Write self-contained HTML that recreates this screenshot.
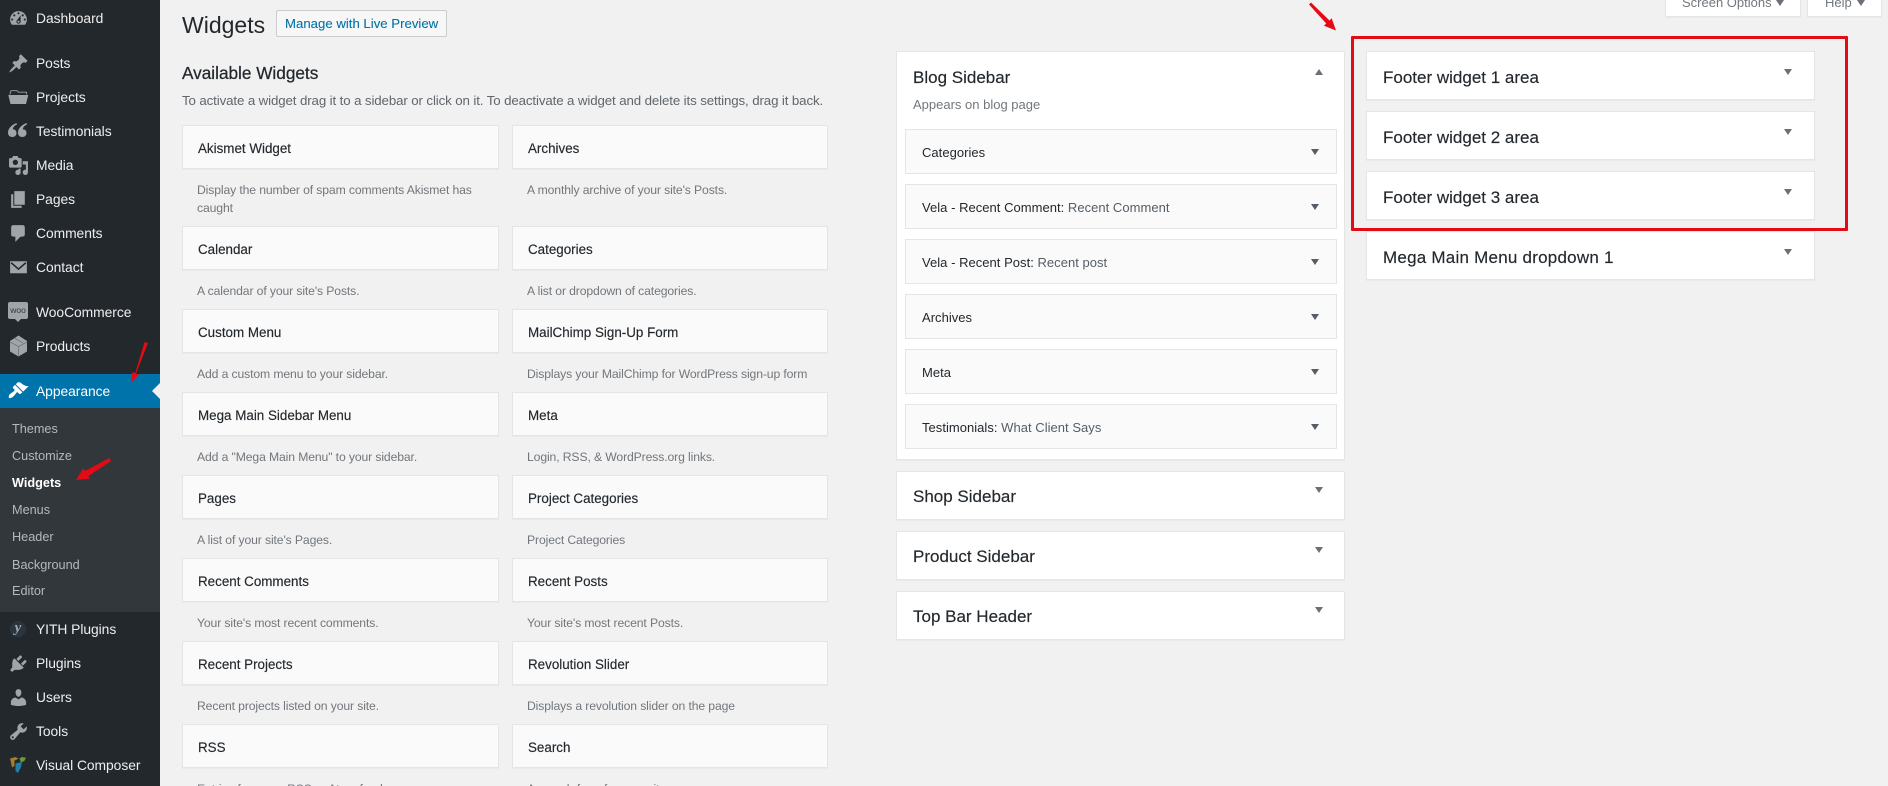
<!DOCTYPE html>
<html lang="en"><head><meta charset="utf-8"><title>Widgets</title>
<style>
*{box-sizing:border-box}
html,body{margin:0;padding:0;width:1888px;height:786px;overflow:hidden;background:#f1f1f1}
body{position:relative;font-family:"Liberation Sans",Arial,sans-serif;color:#23282d}
.a{position:absolute}
.t{position:absolute;white-space:nowrap;line-height:20px;height:20px}
#side{position:absolute;left:0;top:0;width:160px;height:786px;background:#23282d}
#sub{position:absolute;left:0;top:408px;width:160px;height:204px;background:#32373c}
#cur{position:absolute;left:0;top:374px;width:160px;height:34px;background:#0073aa}
#cur:after{content:"";position:absolute;right:0;top:9px;border:8px solid transparent;border-right-color:#f1f1f1;border-left:0}
.m{left:36px;font-size:13.85px;color:#eee;letter-spacing:-.05px}
.s{left:12px;font-size:12.7px;color:#b4b9be}
.i{position:absolute;left:8px;width:21px;height:21px;fill:#a0a5aa}
.w{position:absolute;width:317px;height:44px;background:#fafafa;border:1px solid #e5e5e5;box-shadow:0 1px 1px rgba(0,0,0,.04)}
.wt{font-size:13.4px;color:#23282d;-webkit-text-stroke:.15px #23282d;margin-top:1px}
.d{font-size:12.2px;color:#72777c;letter-spacing:-.12px}
.box{position:absolute;background:#fff;border:1px solid #e5e5e5;box-shadow:0 1px 1px rgba(0,0,0,.04)}
.h{font-size:17px;color:#23282d;-webkit-text-stroke:.15px #23282d;margin-top:1px}
.in{position:absolute;left:905px;width:432px;height:45px;background:#fafafa;border:1px solid #e5e5e5}
.it{left:922px;font-size:13px;color:#23282d;letter-spacing:.03px;margin-top:1px}
.it span{color:#555d66}
.c{position:absolute;width:0;height:0;border-left:4px solid transparent;border-right:4px solid transparent;border-top:6px solid #6a7077}
.u{border-top:0;border-bottom:6px solid #6a7077}
.ib{border-top-color:#555d66}
</style></head><body>

<div id="side"></div><div id="sub"></div><div id="cur"></div>

<svg class="i" style="top:8px" viewBox="0 0 20 20"><path d="M3.76 16h12.48c1.1-1.37 1.76-3.11 1.76-5 0-4.42-3.58-8-8-8s-8 3.58-8 8c0 1.89.66 3.63 1.76 5zM10 4c.55 0 1 .45 1 1s-.45 1-1 1-1-.45-1-1 .45-1 1-1zM6 6c.55 0 1 .45 1 1s-.45 1-1 1-1-.45-1-1 .45-1 1-1zm8 0c.55 0 1 .45 1 1s-.45 1-1 1-1-.45-1-1 .45-1 1-1zm-5.37 5.55L12 7v6c0 1.1-.9 2-2 2s-2-.9-2-2c0-.57.24-1.08.63-1.45zM4 10c.55 0 1 .45 1 1s-.45 1-1 1-1-.45-1-1 .45-1 1-1zm12 0c.55 0 1 .45 1 1s-.45 1-1 1-1-.45-1-1 .45-1 1-1zm-5 3c0-.55-.45-1-1-1s-1 .45-1 1 .45 1 1 1 1-.45 1-1z" fill-rule="evenodd"/></svg>
<svg class="i" style="top:53px" viewBox="0 0 20 20"><path d="M10.44 3.02l1.82-1.82 6.36 6.35-1.83 1.82c-1.05-.68-2.48-.57-3.41.36l-.75.75c-.92.93-1.04 2.35-.35 3.41l-1.83 1.82-2.41-2.41-2.8 2.79c-.42.42-3.38 2.71-3.8 2.29s1.86-3.39 2.28-3.81l2.79-2.79L4.1 9.36l1.83-1.82c1.05.69 2.48.57 3.4-.36l.75-.75c.93-.92 1.05-2.35.36-3.41z"/></svg>
<svg class="i" style="top:87px" viewBox="0 0 21 21"><path d="M.3 8h20l-2.300 9H2.500z"/><path d="M1.800 7.500L3 3.700h6l1.400 1.500h8v2.300" fill="none" stroke="#a0a5aa" stroke-width=".9"/></svg>
<svg class="i" style="top:123px;width:19px;height:14px" viewBox="0 0 19 14"><path d="M8.500 0C3.500 2 0 5.500 0 9.500 0 12.500 1.800 14 4.300 14 6.800 14 8.500 12.300 8.500 10 8.500 7.800 7 6.300 4.800 6.300 5 4 6.500 2.500 9 1.500zM18.500 0C13.500 2 10 5.500 10 9.500 10 12.500 11.800 14 14.300 14 16.800 14 18.500 12.300 18.500 10 18.500 7.800 17 6.300 14.800 6.300 15 4 16.500 2.500 19 1.500z"/></svg>
<svg class="i" style="top:155px" viewBox="0 0 20 20"><path d="M13 11V4c0-.55-.45-1-1-1h-1.670L9 1H5L3.670 3H2c-.55 0-1 .45-1 1v7c0 .55.45 1 1 1h10c.55 0 1-.45 1-1zM7 4.500c1.380 0 2.500 1.120 2.500 2.500S8.380 9.500 7 9.500 4.500 8.380 4.500 7 5.620 4.500 7 4.500zM14 6h5v10.500c0 1.380-1.120 2.500-2.500 2.500S14 17.880 14 16.500s1.120-2.500 2.500-2.500c.17 0 .34.02.5.05V9h-3V6zm-4 8.050V13h2v3.500c0 1.380-1.120 2.500-2.500 2.500S7 17.880 7 16.500 8.120 14 9.500 14c.17 0 .34.02.5.05z" fill-rule="evenodd"/></svg>
<svg class="i" style="top:189px" viewBox="0 0 20 20"><path d="M6 15V2h10v13H6zm-1 1h8v2H3V5h2v11z"/></svg>
<svg class="i" style="top:223px" viewBox="0 0 20 20"><path d="M5 2h9c1.100 0 2 .9 2 2v7c0 1.100-.9 2-2 2h-2l-5 5v-5H5c-1.100 0-2-.9-2-2V4c0-1.100.9-2 2-2z"/></svg>
<svg class="i" style="top:257px" viewBox="0 0 20 20"><path d="M2 4h16v11.500H2z"/><path d="M3 5.500l7 6 7-6" fill="none" stroke="#23282d" stroke-width="1.500"/></svg>

<div class="a" style="left:8px;top:302px;width:20px;height:17px;background:#a0a5aa;border-radius:2px"></div>
<div class="a" style="left:15px;top:319px;width:0;height:0;border-left:3px solid transparent;border-right:3px solid transparent;border-top:3px solid #a0a5aa"></div>
<div class="t" style="left:8px;top:300px;width:20px;text-align:center;font-size:8.500px;color:#32373c">woo</div>
<svg class="a" style="left:9px;top:335px;width:19px;height:22px" viewBox="0 0 19 22"><path d="M9.500.5l8.500 5.500v10.500L9.500 21.500 1 16.500V6z" fill="#a0a5aa"/><path d="M1 7l8.500 4.500L18 7M9.500 11.500V21M5.500 3l8.500 5" fill="none" stroke="#5f6469" stroke-width=".6"/></svg>
<svg class="i" style="top:380px;fill:#fff" viewBox="0 0 20 20"><path d="M14.480 11.060L7.410 3.990l1.500-1.500c.5-.56 2.300-.47 3.510.32 1.210.8 1.430 1.280 2.910 2.100 1.180.64 2.450 1.260 4.450.85zm-.71.71L6.700 4.700 4.930 6.470c-.39.39-.39 1.020 0 1.410l1.060 1.060c.39.39.39 1.030 0 1.420-.6.6-1.430 1.110-2.210 1.690-.35.26-.7.53-1.010.84C1.430 13.230.2 15.800.9 16.900c.9 1.100 3.400-.4 4.700-1.700.31-.31.58-.66.84-1.010.58-.78 1.090-1.610 1.690-2.210.39-.39 1.030-.39 1.420 0l1.060 1.060c.39.39 1.020.39 1.410 0z"/></svg>

<div class="a" style="left:10px;top:621px;width:16px;height:16px;border-radius:50%;background:#2b3540"></div>
<div class="t" style="left:10px;top:618px;width:16px;text-align:center;font:italic 700 15px/20px 'Liberation Serif',serif;color:#a0a5aa">y</div>
<svg class="i" style="top:653px" viewBox="0 0 20 20"><path d="M13.110 4.360L9.870 7.600 8 5.730l3.240-3.240c.35-.34 1.050-.2 1.560.32.52.51.66 1.210.31 1.550zm-8 1.770l.91-1.120 9.010 9.010-1.190.84c-.71.71-2.630 1.160-3.820 1.160H6.140L4.900 17.260c-.59.59-1.540.59-2.120 0-.59-.58-.59-1.530 0-2.120l1.240-1.240v-3.880c0-1.130.4-3.190 1.090-3.890zm7.260 3.970l3.240-3.240c.34-.35 1.040-.21 1.550.31.52.51.66 1.210.31 1.550l-3.240 3.250z"/></svg>
<svg class="i" style="top:687px" viewBox="0 0 20 20"><path d="M10 9.250c-2.270 0-2.730-3.440-2.730-3.440C7 4.020 7.820 2 9.970 2c2.160 0 2.980 2.020 2.710 3.810 0 0-.41 3.440-2.680 3.440zm0 2.570L12.720 10c2.390 0 4.520 2.330 4.520 4.530v2.490s-3.650 1.130-7.240 1.130c-3.650 0-7.240-1.130-7.240-1.130v-2.490c0-2.250 1.940-4.480 4.470-4.480z"/></svg>
<svg class="i" style="top:721px" viewBox="0 0 20 20"><path d="M16.680 9.770c-1.340 1.340-3.300 1.670-4.950.99l-5.410 6.520c-.99.99-2.590.99-3.580 0s-.99-2.590 0-3.570l6.520-5.420c-.68-1.650-.35-3.610.99-4.950 1.280-1.280 3.120-1.620 4.720-1.060l-2.890 2.890 2.820 2.820 2.860-2.870c.53 1.580.18 3.390-1.080 4.650zM3.810 16.210c.4.39 1.040.39 1.430 0 .4-.4.4-1.040 0-1.430-.39-.4-1.030-.4-1.430 0-.39.39-.39 1.030 0 1.430z" fill-rule="evenodd"/></svg>
<svg class="a" style="left:10px;top:757px;width:16px;height:16px" viewBox="0 0 16 16"><path d="M0 1.500L5.500 0l3 1.800L4.500 3.500v5.500l-2.500 1.500-1-5z" fill="#a67c2d"/><path d="M9.500 1.500L12 0l4 .8-1.500 3-3.500 1.700z" fill="#6f9a3a"/><path d="M5.500 6.500L12 5l-1 5-3 6-2.500-2z" fill="#1f7fa8"/></svg>

<div class="t m" style="top:8px">Dashboard</div>
<div class="t m" style="top:53px">Posts</div>
<div class="t m" style="top:87px">Projects</div>
<div class="t m" style="top:121px">Testimonials</div>
<div class="t m" style="top:155px">Media</div>
<div class="t m" style="top:189px">Pages</div>
<div class="t m" style="top:223px">Comments</div>
<div class="t m" style="top:257px">Contact</div>
<div class="t m" style="top:302px">WooCommerce</div>
<div class="t m" style="top:336px">Products</div>
<div class="t m" style="top:381px;color:#fff">Appearance</div>
<div class="t s" style="top:419px">Themes</div>
<div class="t s" style="top:446px">Customize</div>
<div class="t s" style="top:473px;color:#fff;font-weight:700">Widgets</div>
<div class="t s" style="top:500px">Menus</div>
<div class="t s" style="top:527px">Header</div>
<div class="t s" style="top:555px">Background</div>
<div class="t s" style="top:581px">Editor</div>
<div class="t m" style="top:619px">YITH Plugins</div>
<div class="t m" style="top:653px">Plugins</div>
<div class="t m" style="top:687px">Users</div>
<div class="t m" style="top:721px">Tools</div>
<div class="t m" style="top:755px">Visual Composer</div>

<div class="t" style="left:182px;top:15px;font-size:23px;line-height:20px">Widgets</div>
<div class="a" style="left:276px;top:10px;width:171px;height:27px;border:1px solid #ccc;border-radius:2px;background:#f7f7f7"></div>
<div class="t" style="left:285px;top:14px;font-size:13.2px;color:#0073aa;-webkit-text-stroke:.1px #0073aa">Manage with Live Preview</div>
<div class="t" style="left:182px;top:63px;font-size:17.200px;-webkit-text-stroke:.25px #23282d">Available Widgets</div>
<div class="t" style="left:182px;top:91px;font-size:13.300px;color:#60666c;letter-spacing:-.12px">To activate a widget drag it to a sidebar or click on it. To deactivate a widget and delete its settings, drag it back.</div>

<div class="w" style="left:182px;top:125px"></div><div class="w" style="left:512px;top:125px;width:316px"></div>
<div class="w" style="left:182px;top:226px"></div><div class="w" style="left:512px;top:226px;width:316px"></div>
<div class="w" style="left:182px;top:309px"></div><div class="w" style="left:512px;top:309px;width:316px"></div>
<div class="w" style="left:182px;top:392px"></div><div class="w" style="left:512px;top:392px;width:316px"></div>
<div class="w" style="left:182px;top:475px"></div><div class="w" style="left:512px;top:475px;width:316px"></div>
<div class="w" style="left:182px;top:558px"></div><div class="w" style="left:512px;top:558px;width:316px"></div>
<div class="w" style="left:182px;top:641px"></div><div class="w" style="left:512px;top:641px;width:316px"></div>
<div class="w" style="left:182px;top:724px"></div><div class="w" style="left:512px;top:724px;width:316px"></div>

<div class="t wt" style="left:198px;top:138px">Akismet Widget</div><div class="t wt" style="left:528px;top:138px">Archives</div>
<div class="t d" style="left:197px;top:180px">Display the number of spam comments Akismet has</div>
<div class="t d" style="left:197px;top:198px">caught</div>
<div class="t d" style="left:527px;top:180px">A monthly archive of your site's Posts.</div>

<div class="t wt" style="left:198px;top:239px">Calendar</div><div class="t wt" style="left:528px;top:239px">Categories</div>
<div class="t d" style="left:197px;top:281px">A calendar of your site's Posts.</div>
<div class="t d" style="left:527px;top:281px">A list or dropdown of categories.</div>

<div class="t wt" style="left:198px;top:322px">Custom Menu</div><div class="t wt" style="left:528px;top:322px">MailChimp Sign-Up Form</div>
<div class="t d" style="left:197px;top:364px">Add a custom menu to your sidebar.</div>
<div class="t d" style="left:527px;top:364px">Displays your MailChimp for WordPress sign-up form</div>

<div class="t wt" style="left:198px;top:405px">Mega Main Sidebar Menu</div><div class="t wt" style="left:528px;top:405px">Meta</div>
<div class="t d" style="left:197px;top:447px">Add a "Mega Main Menu" to your sidebar.</div>
<div class="t d" style="left:527px;top:447px">Login, RSS, &amp; WordPress.org links.</div>

<div class="t wt" style="left:198px;top:488px">Pages</div><div class="t wt" style="left:528px;top:488px">Project Categories</div>
<div class="t d" style="left:197px;top:530px">A list of your site's Pages.</div>
<div class="t d" style="left:527px;top:530px">Project Categories</div>

<div class="t wt" style="left:198px;top:571px">Recent Comments</div><div class="t wt" style="left:528px;top:571px">Recent Posts</div>
<div class="t d" style="left:197px;top:613px">Your site's most recent comments.</div>
<div class="t d" style="left:527px;top:613px">Your site's most recent Posts.</div>

<div class="t wt" style="left:198px;top:654px">Recent Projects</div><div class="t wt" style="left:528px;top:654px">Revolution Slider</div>
<div class="t d" style="left:197px;top:696px">Recent projects listed on your site.</div>
<div class="t d" style="left:527px;top:696px">Displays a revolution slider on the page</div>

<div class="t wt" style="left:198px;top:737px">RSS</div><div class="t wt" style="left:528px;top:737px">Search</div>
<div class="t d" style="left:197px;top:779px">Entries from any RSS or Atom feed.</div>
<div class="t d" style="left:527px;top:779px">A search form for your site.</div>

<div class="box" style="left:896px;top:51px;width:449px;height:409px"></div>
<div class="t h" style="left:913px;top:67px">Blog Sidebar</div>
<div class="t" style="left:913px;top:95px;font-size:13px;color:#72777c">Appears on blog page</div>
<div class="c u" style="left:1315px;top:69px"></div>
<div class="in" style="top:129px"></div>
<div class="in" style="top:184px"></div>
<div class="in" style="top:239px"></div>
<div class="in" style="top:294px"></div>
<div class="in" style="top:349px"></div>
<div class="in" style="top:404px"></div>
<div class="t it" style="top:142px">Categories</div>
<div class="t it" style="top:197px">Vela - Recent Comment: <span>Recent Comment</span></div>
<div class="t it" style="top:252px">Vela - Recent Post: <span>Recent post</span></div>
<div class="t it" style="top:307px">Archives</div>
<div class="t it" style="top:362px">Meta</div>
<div class="t it" style="top:417px">Testimonials: <span>What Client Says</span></div>
<div class="c ib" style="left:1311px;top:149px"></div>
<div class="c ib" style="left:1311px;top:204px"></div>
<div class="c ib" style="left:1311px;top:259px"></div>
<div class="c ib" style="left:1311px;top:314px"></div>
<div class="c ib" style="left:1311px;top:369px"></div>
<div class="c ib" style="left:1311px;top:424px"></div>

<div class="box" style="left:896px;top:471px;width:449px;height:49px"></div>
<div class="t h" style="left:913px;top:486px">Shop Sidebar</div><div class="c" style="left:1315px;top:487px"></div>
<div class="box" style="left:896px;top:531px;width:449px;height:49px"></div>
<div class="t h" style="left:913px;top:546px">Product Sidebar</div><div class="c" style="left:1315px;top:547px"></div>
<div class="box" style="left:896px;top:591px;width:449px;height:49px"></div>
<div class="t h" style="left:913px;top:606px">Top Bar Header</div><div class="c" style="left:1315px;top:607px"></div>

<div class="box" style="left:1366px;top:51px;width:449px;height:49px"></div>
<div class="t h" style="left:1383px;top:67px">Footer widget 1 area</div><div class="c" style="left:1784px;top:69px"></div>
<div class="box" style="left:1366px;top:111px;width:449px;height:49px"></div>
<div class="t h" style="left:1383px;top:127px">Footer widget 2 area</div><div class="c" style="left:1784px;top:129px"></div>
<div class="box" style="left:1366px;top:171px;width:449px;height:49px"></div>
<div class="t h" style="left:1383px;top:187px">Footer widget 3 area</div><div class="c" style="left:1784px;top:189px"></div>
<div class="box" style="left:1366px;top:231px;width:449px;height:49px"></div>
<div class="t h" style="left:1383px;top:247px;letter-spacing:.23px">Mega Main Menu dropdown 1</div><div class="c" style="left:1784px;top:249px"></div>

<div class="a" style="left:1351px;top:36px;width:497px;height:195px;border:3px solid #e30b14;border-radius:1px"></div>

<div class="a" style="left:1665px;top:-5px;width:136px;height:22px;background:#fff;border:1px solid #e5e5e5;box-shadow:0 1px 1px rgba(0,0,0,.04)"></div>
<div class="t" style="left:1682px;top:-7px;font-size:13px;color:#72777c">Screen Options</div>
<div class="c" style="left:1776px;top:0"></div>
<div class="a" style="left:1807px;top:-5px;width:75px;height:22px;background:#fff;border:1px solid #e5e5e5;box-shadow:0 1px 1px rgba(0,0,0,.04)"></div>
<div class="t" style="left:1825px;top:-7px;font-size:13px;color:#72777c">Help</div>
<div class="c" style="left:1857px;top:0"></div>

<svg class="a" style="left:0;top:0;pointer-events:none" width="1888" height="786" viewBox="0 0 1888 786">
<g fill="#e30b14">
<path d="M1309 4.500l2-2 18.500 18 2.200-2.200 4.300 12.200-12-4.800 2.200-2.200z"/>
<path d="M148 343l-3.400-1-9.300 31-3-.9L131.500 383l7.500-8.500-3-.9z"/>
<path d="M111 461l-1.600-3-24.400 13-1.600-2.800-7.400 11.800 13.800-1.200-1.500-2.700z"/>
</g></svg>
</body></html>
